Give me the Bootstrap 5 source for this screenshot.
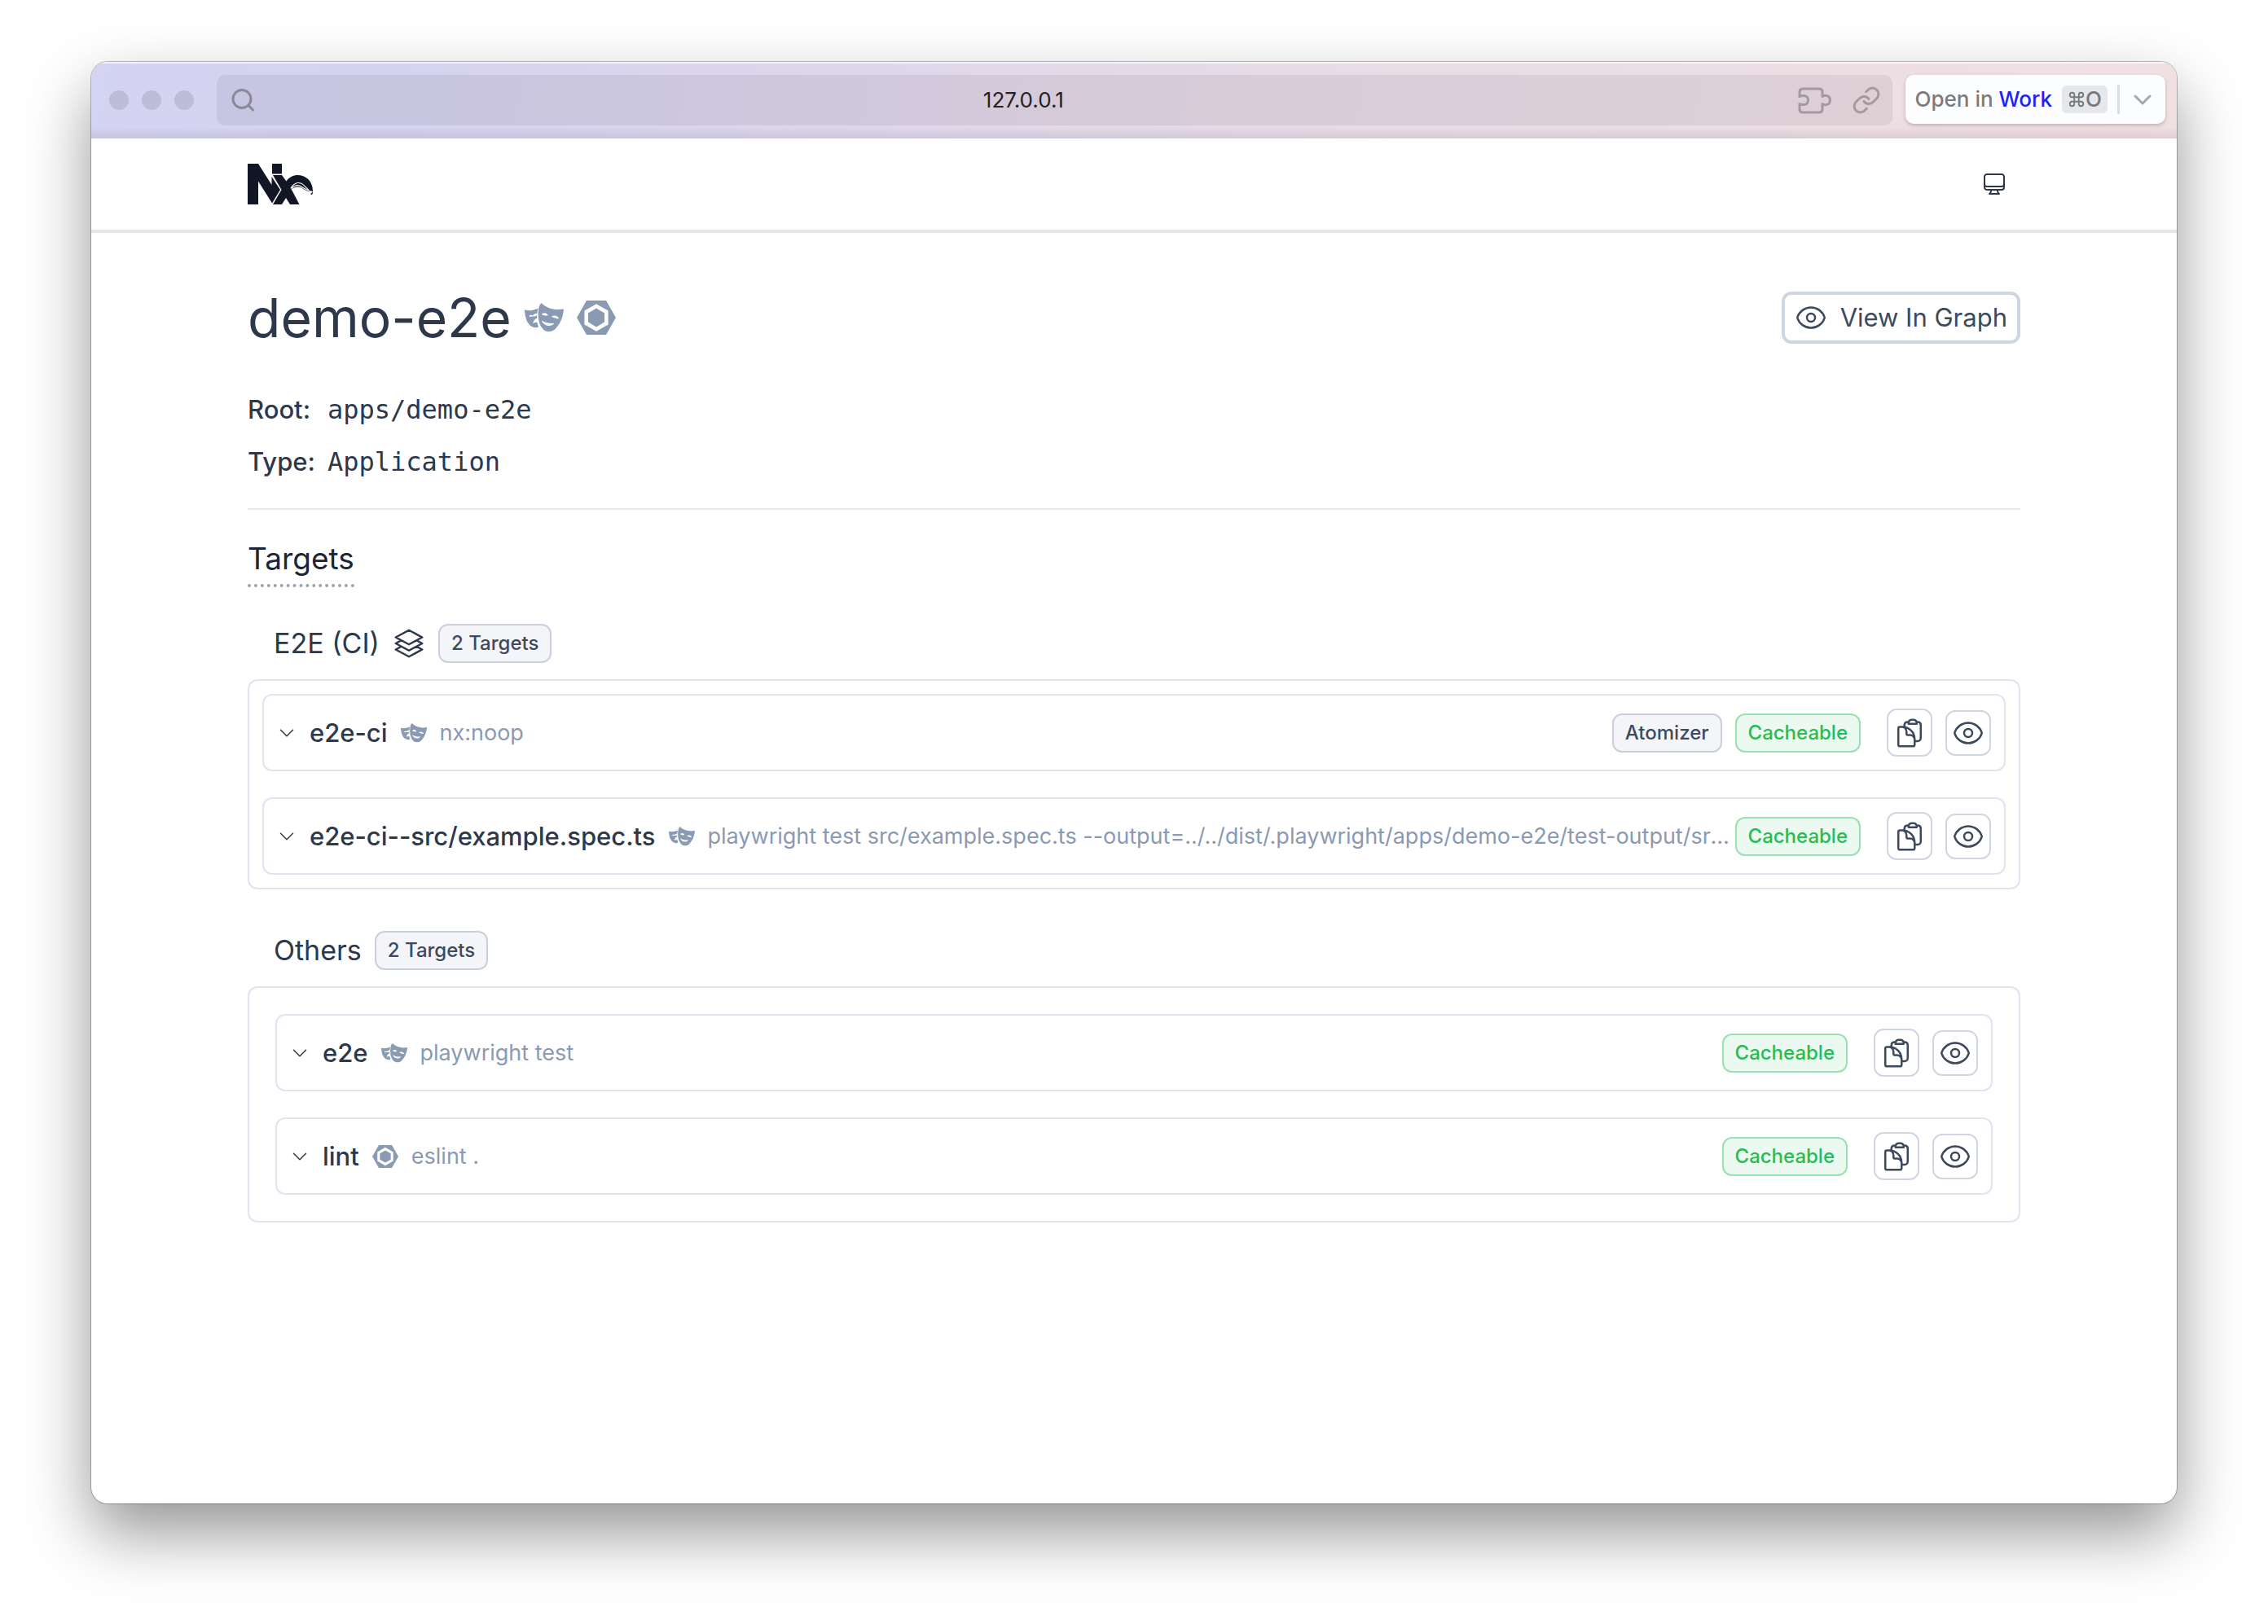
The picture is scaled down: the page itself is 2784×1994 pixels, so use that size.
<!DOCTYPE html>
<html lang="en">
<head>
<meta charset="utf-8">
<meta name="viewport" content="width=device-width, initial-scale=1">
<title>demo-e2e</title>
<link href="https://cdn.jsdelivr.net/npm/bootstrap@5.3.0/dist/css/bootstrap.min.css" rel="stylesheet">
<style>
  :root { --ink: #2d384b; --soft: #3d4a5e; --mute: #8a9ab3; --line: #dfe5ef; --edge: #cfd6e1; }
  body { font-family: Inter, "Liberation Sans", sans-serif; color: var(--ink); background: #fff; padding: 76px 112px 148px; min-height: 100vh; display: flex; font-size: 28px; line-height: 40px; }
  svg { display: block; flex: none; fill: none; stroke: currentColor; stroke-width: 1.5; stroke-linecap: round; stroke-linejoin: round; }
  .solid { fill: currentColor; stroke: none; }
  .ic-24 { width: 24px; height: 24px; }
  .ic-32 { width: 32px; height: 32px; }
  .ic-40 { width: 40px; height: 40px; }
  .ic-48 { width: 48px; height: 48px; }
  .browser { min-width: 0; border-radius: 20px; background: #fff; box-shadow: 0 0 0 1px rgba(0,0,0,.26), 0 36px 80px rgba(0,0,0,.42); }
  .chrome { height: 94px; padding: 0 14px 0 22px; border-radius: 20px 20px 0 0; background: linear-gradient(to bottom, rgba(255,255,255,.7) 0 2px, transparent 2px 80px, rgba(70,50,90,.11)), linear-gradient(100deg, #d3d4f2 0%, #d5d3ef 16%, #e8dce6 60%, #f0e0e2 100%); }
  .dot { width: 24px; height: 24px; border-radius: 50%; background: #bdbdd8; }
  .address { height: 62px; padding: 0 14px 0 16px; border-radius: 10px; background: rgba(40,30,40,.075); margin-left: 28px; color: #222; font-size: 26px; }
  .address svg { color: #8b8997; stroke-width: 3; }
  .address .tools svg { color: #a3999f; }
  .address .chain { stroke-width: 2; }
  .open-in { height: 60px; border: 0; border-radius: 10px; background: #fcfdff; box-shadow: 0 2px 4px rgba(60,30,50,.25); margin: 0 0 2px 16px; padding: 0 16px 0 12px; font-size: 26px; color: #7b7b7e; font-weight: 500; gap: 12px; white-space: nowrap; }
  .open-in b { color: #1c22f5; font-weight: 500; }
  .open-in > svg { stroke-width: 3; color: #a6a7aa; margin-left: 4px; }
  .keys { background: #e6e7ea; border-radius: 6px; padding: 0 7px; height: 34px; color: #77787b; font-size: 26px; }
  .keys svg { width: 22px; height: 22px; stroke-width: 2; }
  .bar-split { width: 3px; height: 36px; background: #dcdde0; }
  .site-head { height: 116px; border-bottom: 4px solid #e6e6e6; padding: 0 208px 0 192px; }
  .brand { color: #111724; }
  .page { padding: 64px 192px 0; }
  h1 { font-size: 66px; line-height: 80px; font-weight: 400; margin: 0; }
  .tech { color: var(--mute); }
  .graph-btn { border: 4px solid var(--edge); border-radius: 12px; background: #fff; color: var(--soft); font-size: 31px; padding: 8px 12px; height: 64px; }
  .facts { font-size: 31px; line-height: 40px; margin: 53px 0 0; }
  .facts dt { font-weight: 500; width: 98px; }
  .facts dd { margin: 0; font-family: "DejaVu Sans Mono", monospace; font-size: 32px; }
  .rule { border: 0; border-top: 2px solid #e6e8eb; opacity: 1; margin: 37px 0 0; }
  h2 { display: table; font-size: 37px; line-height: 56px; color: #1c2534; font-weight: 400; margin: 32px 0 45px; padding-bottom: 3px; border-bottom: 4px dotted #9ba3af; }
  h3 { font-size: 34px; line-height: 48px; font-weight: 400; margin: 0; }
  .group-head { padding: 0 32px; margin-bottom: 20px; }
  .pill { height: 48px; line-height: 44px; border: 2px solid #c9d0dc; border-radius: 12px; background: #f3f5f8; color: var(--soft); font-size: 24px; font-weight: 500; padding: 0 14px; white-space: nowrap; }
  .pill-ok { border-color: #98e2b0; background: #ebf9f0; color: #24bd56; }
  .target-box { border: 2px solid var(--line); border-radius: 12px; padding: 16px; margin-bottom: 51px; gap: 32px; }
  .target-box.roomy { padding: 32px; }
  .target { border: 2px solid var(--line); border-radius: 12px; padding: 16px; }
  .target-name { font-size: 31px; font-weight: 500; white-space: nowrap; }
  .target-cmd { font-size: 27px; color: var(--mute); min-width: 0; flex: 1; }
  .fold, .head-btn { border: 0; background: none; color: inherit; padding: 0; }
  .tool { border: 2px solid var(--edge); border-radius: 12px; background: #fff; color: var(--soft); padding: 6px; height: 56px; }
  .tool.tall { height: 59px; }
</style>
</head>
<body>
<svg width="0" height="0" class="position-absolute" aria-hidden="true">
  <symbol id="eye" viewBox="0 0 24 24"><path d="M2.036 12.322a1.012 1.012 0 0 1 0-.639C3.423 7.51 7.36 4.5 12 4.5c4.638 0 8.573 3.007 9.963 7.178.07.207.07.431 0 .639C20.577 16.49 16.64 19.5 12 19.5c-4.638 0-8.573-3.007-9.963-7.178Z"/><path d="M15 12a3 3 0 1 1-6 0 3 3 0 0 1 6 0Z"/></symbol>
  <symbol id="clip" viewBox="0 0 24 24"><path d="M8.25 7.5V6.108c0-1.135.845-2.098 1.976-2.192.373-.03.748-.057 1.123-.08M15.75 18H18a2.25 2.25 0 0 0 2.25-2.25V6.108c0-1.135-.845-2.098-1.976-2.192a48.424 48.424 0 0 0-1.123-.08M15.75 18.75v-1.875a3.375 3.375 0 0 0-3.375-3.375h-1.5a1.125 1.125 0 0 1-1.125-1.125v-1.5A3.375 3.375 0 0 0 6.375 7.5H5.25m11.9-3.664A2.251 2.251 0 0 0 15 2.25h-1.5a2.251 2.251 0 0 0-2.15 1.586m5.8 0c.065.21.1.433.1.664v.75h-6V4.5c0-.231.035-.454.1-.664M6.75 7.5H4.875c-.621 0-1.125.504-1.125 1.125v12c0 .621.504 1.125 1.125 1.125h9.75c.621 0 1.125-.504 1.125-1.125V16.5a9 9 0 0 0-9-9Z"/></symbol>
  <symbol id="chev" viewBox="0 0 24 24"><path d="m19.5 8.25-7.5 7.5-7.5-7.5"/></symbol>
  <symbol id="stack" viewBox="0 0 24 24"><path d="M6.429 9.75 2.25 12l4.179 2.25m0-4.5 5.571 3 5.571-3m-11.142 0L2.25 7.5 12 2.25l9.75 5.25-4.179 2.25m0 0L21.75 12l-4.179 2.25m0 0 4.179 2.25L12 21.75 2.25 16.5l4.179-2.25m11.142 0-5.571 3-5.571-3"/></symbol>
  <symbol id="masks" viewBox="0 0 48 48"><path fill-rule="evenodd" d="M0 14.6C5 16 10 15.400 16.400 12.800L15.400 19C12.500 18.600 10.200 20.200 9.800 22.400 11.500 23 13.500 22.200 15.200 21.200L15.300 24.500C12.500 25.500 10.400 28.500 10.200 31.200 12 30.400 13.600 29.600 15.400 29.900L17 35.800C9 38 3.500 31.500 1.600 25 .6 21.500 0 18 0 14.600ZM5.200 22.200C7 20.600 9.500 20.300 10.700 21.400 9.300 22.900 7 23.100 5.200 22.200Z"/><path fill-rule="evenodd" d="M20.500 6C27 12.500 36 15.300 48 13.600 47.500 22 44 32 37 38.500 33 41.800 27 41.800 23.500 39 17 33 15.500 22 17.500 11.500 18.200 9 19.300 7 20.500 6ZM20.800 19.900C23 21.200 26 21.800 28.800 21.500 27.800 18.300 23.500 16.700 20.800 19.900ZM32.900 23.100C35.800 24.200 39 25.500 41.800 25.500 41.800 21.500 36 20.300 32.900 23.100ZM20.800 27.400C22.500 32.500 28 34.900 33 33.500 34.500 33 35.700 31.900 36.200 30.700 31 31.600 25 29.800 20.800 27.400Z"/></symbol>
  <symbol id="hex" viewBox="0 0 24 24"><path fill-rule="evenodd" d="M0 12 6 1.500H18L24 12 18 22.500H6ZM12 3.600 4.700 7.800V16.200L12 20.400 19.300 16.200V7.800ZM12 6.300 17 9.200V14.800L12 17.700 7 14.800V9.200Z"/></symbol>
</svg>

<div class="browser flex-fill">
  <div class="chrome d-flex align-items-center">
    <div class="d-flex gap-3"><span class="dot"></span><span class="dot"></span><span class="dot"></span></div>
    <div class="address d-flex align-items-center flex-fill">
      <svg width="32" height="32" viewBox="0 0 32 32"><circle cx="15" cy="14.500" r="11"/><path d="m23 22.500 5.500 5.500"/></svg>
      <span class="flex-fill text-center">127.0.0.1</span>
      <div class="tools d-flex align-items-center gap-4 ms-2">
        <svg width="42" height="36" viewBox="0 0 42 36"><path d="M6 4H26Q30 4 30 8V13.500C33 11 39.500 12 39.500 18S33 25 30 22.500V29Q30 33 26 33H6Q2 33 2 29V22.500C6 24.500 12.500 24 12.500 18S6 11.500 2 13.500V8Q2 4 6 4Z"/></svg>
        <svg class="chain" width="36" height="36" viewBox="0 0 24 24"><path d="M10 13a5 5 0 0 0 7.540.54l3-3a5 5 0 0 0-7.070-7.070l-1.720 1.710"/><path d="M14 11a5 5 0 0 0-7.540-.54l-3 3a5 5 0 0 0 7.070 7.070l1.710-1.710"/></svg>
      </div>
    </div>
    <button class="open-in d-flex align-items-center" type="button">
      <span>Open in <b>Work</b></span>
      <span class="keys d-flex align-items-center"><svg viewBox="0 0 24 24"><path d="M15 6v12a3 3 0 1 0 3-3H6a3 3 0 1 0 3 3V6a3 3 0 1 0-3 3h12a3 3 0 1 0-3-3"/></svg>O</span>
      <span class="bar-split"></span>
      <svg class="ic-24" viewBox="0 0 24 24"><path d="m3 8 9 9 9-9"/></svg>
    </button>
  </div>

  <header class="site-head d-flex align-items-center justify-content-between">
    <a href="#" class="brand" aria-label="Nx">
      <svg class="solid" width="80" height="50" viewBox="0 0 80 50"><path d="M0 0H13L29.500 26V16L40 32 30 48.500 13 21.500V50H0Z"/><path d="M30 0H42V12.500H30Z"/><path d="M31 14H42L47.500 21.500C53 13 65 11.500 73 18 78 22 80 27.500 80 34.500 78 33 76.500 33 75 34 70 33 67 28.500 61.500 28.500 57.500 28.500 56 30 53.500 31L63.500 50H52L47 42 42 50H31L41.500 32Z"/><path d="M77 37Q80 35 80 34 80 38 78.500 38Z"/><path fill="none" stroke="#fff" stroke-width="1.100" d="M53 30C58 22 65 22 69 26.500 71 29 73 30 75.500 33M54 30C60 24 65 27 68 29.500 70 31 72 31.500 75 33"/></svg>
    </a>
    <button class="head-btn" type="button" aria-label="Theme"><svg class="ic-32" viewBox="0 0 24 24"><path d="M9 17.250v1.007a3 3 0 0 1-.879 2.122L7.500 21h9l-.621-.621A3 3 0 0 1 15 18.257V17.250m6-12V15a2.250 2.250 0 0 1-2.250 2.250H5.250A2.250 2.250 0 0 1 3 15V5.250m18 0A2.250 2.250 0 0 0 18.750 3H5.250A2.250 2.250 0 0 0 3 5.250m18 0V12a2.250 2.250 0 0 1-2.250 2.250H5.250A2.250 2.250 0 0 1 3 12V5.250"/></svg></button>
  </header>

  <main class="page">
    <div class="d-flex align-items-center gap-3">
      <h1>demo-e2e</h1>
      <svg class="solid tech ic-48"><use href="#masks"/></svg>
      <svg class="solid tech ic-48"><use href="#hex"/></svg>
      <button class="graph-btn d-flex align-items-center gap-3 ms-auto" type="button"><svg class="ic-40"><use href="#eye"/></svg>View In Graph</button>
    </div>
    <dl class="facts d-flex flex-column gap-4">
      <div class="d-flex"><dt>Root:</dt><dd>apps/demo-e2e</dd></div>
      <div class="d-flex"><dt>Type:</dt><dd>Application</dd></div>
    </dl>
    <hr class="rule">
    <h2>Targets</h2>

    <div class="group-head d-flex align-items-center gap-3">
      <h3>E2E (CI)</h3><svg class="ic-40"><use href="#stack"/></svg><span class="pill">2 Targets</span>
    </div>
    <div class="target-box d-flex flex-column">
      <div class="target d-flex align-items-center">
        <button class="fold me-3" type="button" aria-label="Expand e2e-ci"><svg class="ic-24"><use href="#chev"/></svg></button>
        <span class="target-name">e2e-ci</span>
        <svg class="solid tech ic-32 mx-3"><use href="#masks"/></svg>
        <span class="target-cmd text-truncate">nx:noop</span>
        <span class="pill me-3">Atomizer</span><span class="pill pill-ok">Cacheable</span>
        <div class="d-flex align-items-center gap-3 ms-3 ps-3">
          <button class="tool tall" type="button" aria-label="Copy"><svg class="ic-40"><use href="#clip"/></svg></button>
          <button class="tool" type="button" aria-label="View"><svg class="ic-40"><use href="#eye"/></svg></button>
        </div>
      </div>
      <div class="target d-flex align-items-center">
        <button class="fold me-3" type="button" aria-label="Expand e2e-ci--src/example.spec.ts"><svg class="ic-24"><use href="#chev"/></svg></button>
        <span class="target-name">e2e-ci--src/example.spec.ts</span>
        <svg class="solid tech ic-32 mx-3"><use href="#masks"/></svg>
        <span class="target-cmd text-truncate">playwright test src/example.spec.ts --output=../../dist/.playwright/apps/demo-e2e/test-output/src-example-spec-ts</span>
        <span class="pill pill-ok">Cacheable</span>
        <div class="d-flex align-items-center gap-3 ms-3 ps-3">
          <button class="tool tall" type="button" aria-label="Copy"><svg class="ic-40"><use href="#clip"/></svg></button>
          <button class="tool" type="button" aria-label="View"><svg class="ic-40"><use href="#eye"/></svg></button>
        </div>
      </div>
    </div>

    <div class="group-head d-flex align-items-center gap-3">
      <h3>Others</h3><span class="pill">2 Targets</span>
    </div>
    <div class="target-box roomy d-flex flex-column">
      <div class="target d-flex align-items-center">
        <button class="fold me-3" type="button" aria-label="Expand e2e"><svg class="ic-24"><use href="#chev"/></svg></button>
        <span class="target-name">e2e</span>
        <svg class="solid tech ic-32 mx-3"><use href="#masks"/></svg>
        <span class="target-cmd text-truncate">playwright test</span>
        <span class="pill pill-ok">Cacheable</span>
        <div class="d-flex align-items-center gap-3 ms-3 ps-3">
          <button class="tool tall" type="button" aria-label="Copy"><svg class="ic-40"><use href="#clip"/></svg></button>
          <button class="tool" type="button" aria-label="View"><svg class="ic-40"><use href="#eye"/></svg></button>
        </div>
      </div>
      <div class="target d-flex align-items-center">
        <button class="fold me-3" type="button" aria-label="Expand lint"><svg class="ic-24"><use href="#chev"/></svg></button>
        <span class="target-name">lint</span>
        <svg class="solid tech ic-32 mx-3"><use href="#hex"/></svg>
        <span class="target-cmd text-truncate">eslint .</span>
        <span class="pill pill-ok">Cacheable</span>
        <div class="d-flex align-items-center gap-3 ms-3 ps-3">
          <button class="tool tall" type="button" aria-label="Copy"><svg class="ic-40"><use href="#clip"/></svg></button>
          <button class="tool" type="button" aria-label="View"><svg class="ic-40"><use href="#eye"/></svg></button>
        </div>
      </div>
    </div>
  </main>
</div>
<script src="https://cdn.jsdelivr.net/npm/bootstrap@5.3.0/dist/js/bootstrap.bundle.min.js"></script>
</body>
</html>
